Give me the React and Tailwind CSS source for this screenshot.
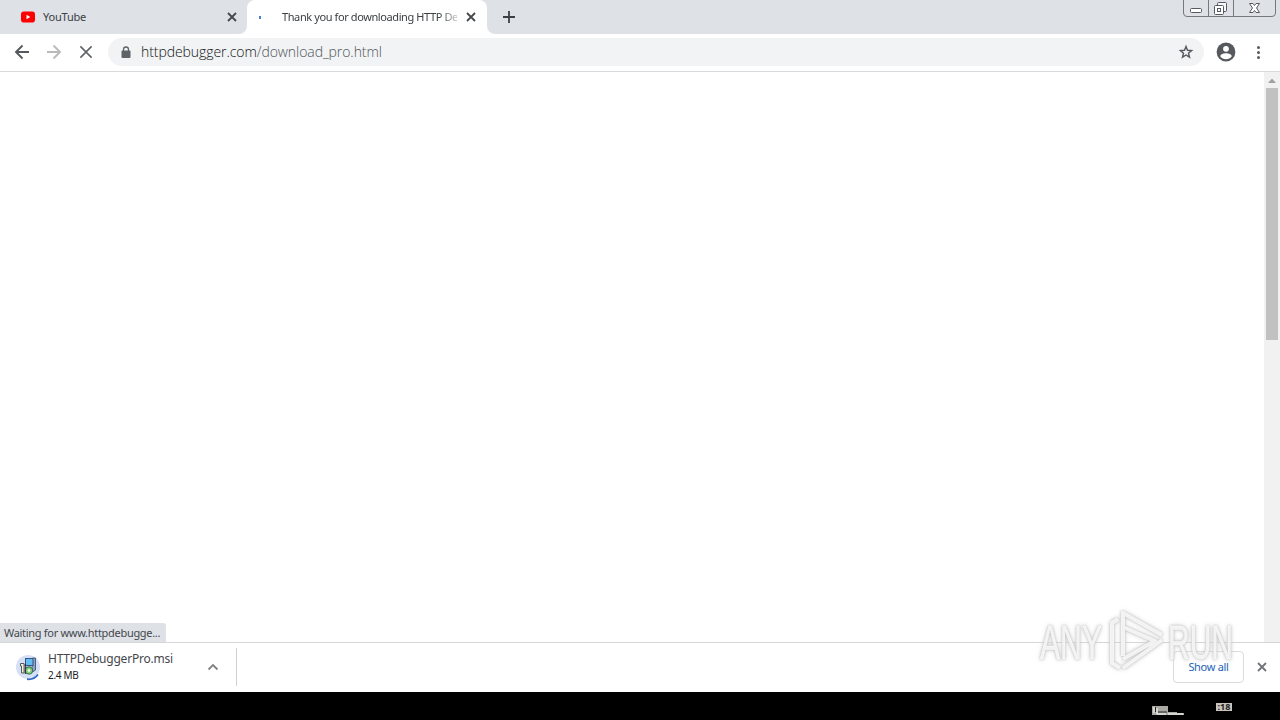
import React from 'react'

const CloseIcon = ({ className = '', size = 10, width = 1.8 }) => (
  <svg width={size} height={size} viewBox="0 0 10 10" className={className} fill="none" stroke="currentColor" strokeWidth={width}>
    <path d="M1 1L9 9M9 1L1 9" />
  </svg>
)

function TabStrip() {
  return (
    <div className="relative flex h-[34px] bg-[#dee1e6] text-[11px] text-[#3c4043]">
      <div className="flex w-[247px] items-center pl-[21px] pr-[10px]">
        <svg width="14" height="12" viewBox="0 0 14 12">
          <rect y="0.5" width="14" height="11" rx="2.8" fill="#f00" />
          <path d="M5.5 3.8v4.4L9.3 6z" fill="#fff" />
        </svg>
        <span className="ml-2 text-[11px] tracking-[-0.2px]">YouTube</span>
        <CloseIcon className="ml-auto text-[#45494d]" />
      </div>
      <div className="relative flex w-[240px] items-center rounded-t-lg bg-white pl-[12px] pr-[11px]">
        <svg className="absolute -left-2 bottom-0" width="8" height="8"><path d="M8 0A8 8 0 0 1 0 8H8z" fill="#fff" /></svg>
        <svg className="absolute -right-2 bottom-0" width="8" height="8"><path d="M0 0A8 8 0 0 0 8 8H0z" fill="#fff" /></svg>
        <span className="h-[3px] w-[2px] bg-[#4a7fc8]" />
        <span className="ml-[21px] w-[175px] overflow-hidden whitespace-nowrap text-[11px] tracking-[-0.4px] [mask-image:linear-gradient(to_right,#000_90%,#0004)]">
          Thank you for downloading HTTP De
        </span>
        <CloseIcon className="ml-auto text-[#45494d]" />
      </div>
      <svg className="ml-[16px] mt-[11px]" width="12" height="12" viewBox="0 0 12 12" stroke="#3c4043" strokeWidth="1.8">
        <path d="M6 0v12M0 6h12" />
      </svg>
      <WindowButtons />
    </div>
  )
}

function WindowButtons() {
  return (
    <svg className="ml-auto mr-[4px]" width="93" height="18" viewBox="0 0 93 18" fill="none" stroke="#74797f">
      <path d="M.5 0v13q0 3.5 3.5 3.5h85q3.5 0 3.5-3.5V0M25.500 0v16.500M50.500 0v16.500" />
      <g stroke="#555a62">
        <rect x="7.5" y="8.5" width="11" height="4" rx="1" fill="#fff" />
        <rect x="34.5" y="2.5" width="9" height="9" rx="1" fill="#f4f5f7" />
        <rect x="31.5" y="5.5" width="9" height="9" rx="1" fill="#fff" />
        <rect x="34.5" y="8.5" width="3" height="3" />
        <path d="M66.500 3.500h3.500l1.500 2 1.500-2h3.500l-3 4.500 3 4.500H73l-1.500-2-1.500 2h-3.500l3-4.500z" fill="#fff" />
      </g>
    </svg>
  )
}

function Toolbar() {
  return (
    <div className="flex h-[38px] items-center border-b border-[#d8dadc] bg-white pr-[18px]">
      <svg className="ml-[14px] -mt-px" width="16" height="16" viewBox="0 0 16 16" fill="none" stroke="#55595e" strokeWidth="1.9">
        <path d="M15 8H2M8.500 1.500L2 8l6.500 6.500" />
      </svg>
      <svg className="ml-[16px] -mt-px" width="16" height="16" viewBox="0 0 16 16" fill="none" stroke="#b8babc" strokeWidth="1.9">
        <path d="M1 8h13M7.500 1.500L14 8l-6.500 6.500" />
      </svg>
      <CloseIcon className="ml-[17px] -mt-px text-[#5f6368]" size={14} width={1.15} />
      <div className="-mt-px ml-[15px] flex h-[28px] w-[1096px] items-center rounded-full bg-[#f1f3f4] pl-[13px] pr-[10px]">
        <svg width="10" height="13" viewBox="0 0 10 13">
          <path d="M2.500 5V3.500a2.500 2.500 0 0 1 5 0V5" fill="none" stroke="#5f6368" strokeWidth="1.3" />
          <rect x=".5" y="4.5" width="9" height="7.5" rx="1" fill="#5f6368" />
        </svg>
        <span className="ml-[10px] whitespace-nowrap font-['Open_Sans',sans-serif] text-[14px] font-light leading-5 tracking-[-0.07px] text-[#505559]">
          <span className="text-[#111315]">httpdebugger.com</span>/download_pro.html
        </span>
        <svg className="ml-auto" width="16" height="16" viewBox="0 0 16 16" fill="none" stroke="#55595e" strokeWidth="1.4">
          <path d="M8 2.500l1.500 3.800 4.100.3-3.100 2.600 1 4L8 11l-3.500 2.200 1-4-3.100-2.600 4.100-.3z" />
        </svg>
      </div>
      <svg className="-mt-px ml-[12px]" width="20" height="20" viewBox="0 0 20 20">
        <circle cx="10" cy="10" r="9.4" fill="#55595e" />
        <circle cx="10" cy="6.8" r="2.9" fill="#fff" />
        <path d="M4.200 14.200c.5-2.300 3.800-3 5.800-3s5.300.7 5.800 3a7 7 0 0 1-11.600 0z" fill="#fff" />
      </svg>
      <svg className="-mt-px ml-auto" width="8" height="16" viewBox="0 0 8 16" fill="#55595e">
        <circle cx="4.5" cy="3.5" r="1.5" /><circle cx="4.5" cy="8.5" r="1.5" /><circle cx="4.5" cy="13.5" r="1.5" />
      </svg>
    </div>
  )
}

function Page() {
  return (
    <div className="flex h-[570px] bg-white">
      <div className="flex flex-1 items-end">
        <div className="h-[19px] w-[166px] whitespace-nowrap rounded-tr-[3px] bg-[#dee1e6] pl-[4px] text-[11px] leading-[20px] tracking-[-0.3px] text-[#44484d]">
          Waiting for www.httpdebugge...
        </div>
      </div>
      <div className="flex w-[16px] flex-col items-center bg-[#f1f1f1]">
        <svg width="16" height="16" viewBox="0 0 16 16"><path d="M4 11l4-4.500L12 11z" fill="#a0a0a0" /></svg>
        <div className="h-[252px] w-[12px] bg-[#c1c1c1]" />
      </div>
    </div>
  )
}

// Windows installer icon with the download progress arc around it
function InstallerIcon() {
  return (
    <svg width="26" height="28" viewBox="0 0 26 28">
      <circle cx="13" cy="14" r="12" fill="#d5dff5" />
      <path d="M12 26.200Q19 27 23 21.500" fill="none" stroke="#3268c7" strokeWidth="1.8" />
      <path d="M17.500 5h3v12l-3 2z" fill="#8ea2c5" stroke="#34496f" strokeWidth=".8" />
      <rect x="10.5" y="5.5" width="7.5" height="7" fill="#62bdf0" stroke="#345384" />
      <path d="M11 13.500h7v2h-7z" fill="#8b98ac" />
      <path d="M5.500 10.500h3.500v9.500H6.500v-7h-1z" fill="#f4f2dc" stroke="#4b4c49" strokeWidth=".9" />
      <circle cx="14" cy="17.5" r="3.7" fill="#86cf78" stroke="#286346" strokeWidth=".9" />
      <circle cx="14" cy="17.5" r="1.2" fill="#fff" />
      <path d="M10.300 11v10" stroke="#252c39" strokeWidth="1.1" />
    </svg>
  )
}

function DownloadShelf() {
  return (
    <div className="flex h-[50px] items-center border-t border-[#d5d6d8] bg-white pr-[13px]">
      <div className="-mt-px flex h-[38px] w-[237px] items-center border-r border-[#ced0d3] pl-[15px] pr-[17px]">
        <InstallerIcon />
        <div className="ml-[7px] flex h-full flex-col">
          <span className="mt-[3px] text-[12px] leading-[15px] tracking-[-0.22px] text-[#44474b]">HTTPDebuggerPro.msi</span>
          <span className="mt-[2px] text-[10px] leading-[14px] tracking-[-0.3px] text-[#202124]">2.4 MB</span>
        </div>
        <svg className="-mt-px ml-auto" width="12" height="8" viewBox="0 0 12 8" fill="none" stroke="#808386" strokeWidth="1.8"><path d="M1.500 6.500L6 2l4.500 4.500" /></svg>
      </div>
      <button className="-mt-[2px] ml-auto h-[32px] w-[71px] rounded border border-[#dadce0] pt-[2px] text-[11px] tracking-[-0.3px] text-[#2462b5]">Show all</button>
      <CloseIcon className="-mt-px ml-[13px] text-[#717477]" />
    </div>
  )
}

function Taskbar() {
  return (
    <div className="flex h-[28px] bg-black pl-[1152px]">
      <svg className="mt-[13px]" width="33" height="10" viewBox="0 0 33 10">
        <path d="M0 1h16v6h9v1h7v2H0z" fill="#aaa9a4" />
        <path d="M2 2v6M5 3v6h9M16 9h15" stroke="#fff" fill="none" />
        <path d="M3.500 2v5M6 7h9" stroke="#222" fill="none" />
      </svg>
      <span className="ml-[31px] mt-[11px] h-[8px] w-[16px] bg-[#c9c5bd] text-center text-[9px] font-bold leading-[8px] text-[#222]">:18</span>
    </div>
  )
}

function Watermark() {
  return (
    <svg className="pointer-events-none absolute left-[1030px] top-[603px] [filter:drop-shadow(0_0_1px_#b4b4b4)_drop-shadow(0_0_2px_#d4d4d4)]" width="212" height="74" viewBox="0 -1 212 74">
      <g fill="#fff" fillOpacity=".8" stroke="#fff" strokeOpacity=".5" strokeWidth=".8" fontFamily="'Liberation Sans', sans-serif" fontSize="48">
        <text x="10" y="55" textLength="62" lengthAdjust="spacingAndGlyphs">ANY</text>
        <text x="138" y="55" textLength="65" lengthAdjust="spacingAndGlyphs">RUN</text>
      </g>
      <path d="M132 31L93 9v39M93 52V23l32 14-32 18M132 36L93 64M88 15l-6 4v40l8 5" fill="none" stroke="#fff" strokeOpacity=".8" strokeWidth="4" strokeLinejoin="round" />
    </svg>
  )
}

export default function App() {
  return (
    <div className="relative h-[720px] w-[1280px] overflow-hidden bg-white font-['Noto_Sans',sans-serif]">
      <TabStrip />
      <Toolbar />
      <Page />
      <DownloadShelf />
      <Taskbar />
      <Watermark />
    </div>
  )
}
